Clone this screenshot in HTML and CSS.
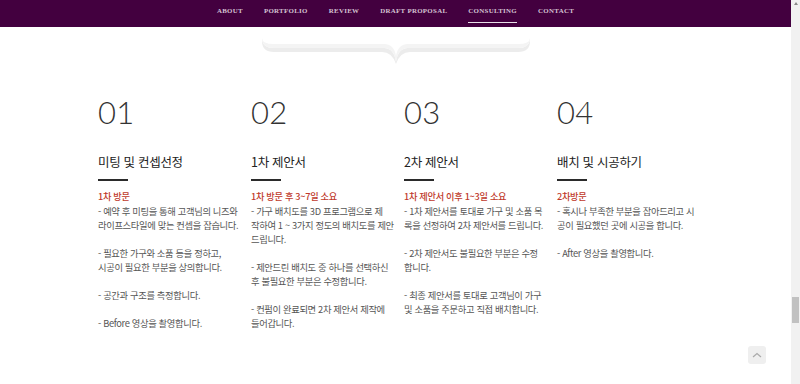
FILE: index.html
```html
<!DOCTYPE html>
<html lang="ko">
<head>
  <meta charset="UTF-8" />
  <meta name="viewport" content="width=device-width, initial-scale=1.0" />
  <title>Consulting</title>
  <link rel="stylesheet" href="styles.css">
</head>
<body>
  <nav class="topnav">
    <a href="#">About</a>
    <a href="#">Portfolio</a>
    <a href="#">Review</a>
    <a href="#">Draft Proposal</a>
    <a href="#" class="active">Consulting</a>
    <a href="#">Contact</a>
  </nav>

  <div class="divider">
    <svg width="272" height="26" viewBox="0 0 272 26">
      <path d="M2 0 Q2 10 14 10 L124 10 Q134 10 136 24 Q138 10 148 10 L258 10 Q270 10 270 0 L270 3 Q270 14 258 14 L150 14 Q140 14 136 26 Q132 14 122 14 L14 14 Q2 14 2 3 Z" fill="#ececec"/>
      <path d="M2 0 Q2 6 14 6 L124 6 Q134 6 136 18 Q138 6 148 6 L258 6 Q270 6 270 0 L270 0 Q270 10 258 10 L148 10 Q138 10 136 24 Q134 10 124 10 L14 10 Q2 10 2 0 Z" fill="#f4f4f4"/>
    </svg>
  </div>

  <section class="steps">
    <div class="step">
      <div class="num">01</div>
      <h3>미팅 및 컨셉선정</h3>
      <div class="dash"></div>
      <div class="label">1차 방문</div>
      <p>- 예약 후 미팅을 통해 고객님의 니즈와<br>라이프스타일에 맞는 컨셉을 잡습니다.</p>
      <p>- 필요한 가구와 소품 등을 정하고,<br>시공이 필요한 부분을 상의합니다.</p>
      <p>- 공간과 구조를 측정합니다.</p>
      <p>- Before 영상을 촬영합니다.</p>
    </div>
    <div class="step">
      <div class="num">02</div>
      <h3>1차 제안서</h3>
      <div class="dash"></div>
      <div class="label">1차 방문 후 3~7일 소요</div>
      <p>- 가구 배치도를 3D 프로그램으로 제<br>작하여 1 ~ 3가지 정도의 배치도를 제안<br>드립니다.</p>
      <p>- 제안드린 배치도 중 하나를 선택하신<br>후 불필요한 부분은 수정합니다.</p>
      <p>- 컨펌이 완료되면 2차 제안서 제작에<br>들어갑니다.</p>
    </div>
    <div class="step">
      <div class="num">03</div>
      <h3>2차 제안서</h3>
      <div class="dash"></div>
      <div class="label">1차 제안서 이후 1~3일 소요</div>
      <p>- 1차 제안서를 토대로 가구 및 소품 목<br>록을 선정하여 2차 제안서를 드립니다.</p>
      <p>- 2차 제안서도 불필요한 부분은 수정<br>합니다.</p>
      <p>- 최종 제안서를 토대로 고객님이 가구<br>및 소품을 주문하고 직접 배치합니다.</p>
    </div>
    <div class="step">
      <div class="num">04</div>
      <h3>배치 및 시공하기</h3>
      <div class="dash"></div>
      <div class="label">2차방문</div>
      <p>- 혹시나 부족한 부분을 잡아드리고 시<br>공이 필요했던 곳에 시공을 합니다.</p>
      <p>- After 영상을 촬영합니다.</p>
    </div>
  </section>

  <a href="#" class="to-top">
    <svg width="10" height="6" viewBox="0 0 10 6"><path d="M1 5 L5 1.5 L9 5" fill="none" stroke="#aaa" stroke-width="1.2"/></svg>
  </a>

  <div class="scrollbar">
    <div class="arrow"></div>
    <div class="thumb"></div>
  </div>
</body>
</html>
```

FILE: styles.css
```css
body {
  margin: 0;
  padding: 0;
  background-color: white;
  font-family: "Noto Sans CJK KR", "Noto Sans", sans-serif;
  overflow: hidden;
  height: 384px;
}

.topnav {
  height: 27px;
  background-color: #43003f;
  display: flex;
  justify-content: center;
  gap: 21px;
  padding-right: 9px;
}

.topnav a {
  font-family: "Liberation Serif", serif;
  font-weight: bold;
  text-transform: uppercase;
  font-size: 6.9px;
  letter-spacing: 0.3px;
  color: #d4c1d2;
  text-decoration: none;
  line-height: 21px;
  height: 23px;
  box-sizing: border-box;
}

.topnav a.active {
  border-bottom: 1.5px solid #e8e0e8;
}

.divider {
  display: flex;
  justify-content: center;
  padding: 11px 0 0 0;
  margin-left: -8px;
}

.divider svg {
  display: block;
}

.steps {
  display: grid;
  grid-template-columns: repeat(4, 148px);
  column-gap: 5px;
  padding: 33px 0 0 98px;
}

.num {
  font-family: Lato, sans-serif;
  font-weight: 300;
  font-size: 31px;
  line-height: 30px;
  color: #333;
  letter-spacing: 0.3px;
}

.step h3 {
  margin: 26px 0 0 0;
  font-size: 12.5px;
  font-weight: 400;
  color: #222;
  line-height: 18px;
  letter-spacing: -0.3px;
}

.dash {
  width: 30px;
  height: 2px;
  background-color: #2b2b2b;
  margin-top: 8px;
}

.label {
  margin-top: 8px;
  font-size: 9.2px;
  font-weight: 500;
  color: #c0392b;
  line-height: 14px;
  letter-spacing: -0.3px;
}

.step p {
  margin: 1px 0 14px 0;
  font-size: 9.3px;
  line-height: 14px;
  color: #555;
  letter-spacing: -0.35px;
}

.to-top {
  position: fixed;
  left: 748px;
  top: 346px;
  width: 18px;
  height: 18px;
  border-radius: 3px;
  background-color: #efefef;
  display: flex;
  align-items: center;
  justify-content: center;
}

.scrollbar {
  position: fixed;
  top: 0;
  right: 0;
  width: 9px;
  height: 384px;
  background-color: #f1f1f1;
}

.scrollbar .arrow {
  width: 0;
  height: 0;
  margin: 2px auto 0 auto;
  border-left: 2.5px solid transparent;
  border-right: 2.5px solid transparent;
  border-bottom: 3px solid #888;
}

.scrollbar .thumb {
  position: absolute;
  top: 297px;
  left: 1px;
  width: 7px;
  height: 26px;
  background-color: #c1c1c1;
}
```
